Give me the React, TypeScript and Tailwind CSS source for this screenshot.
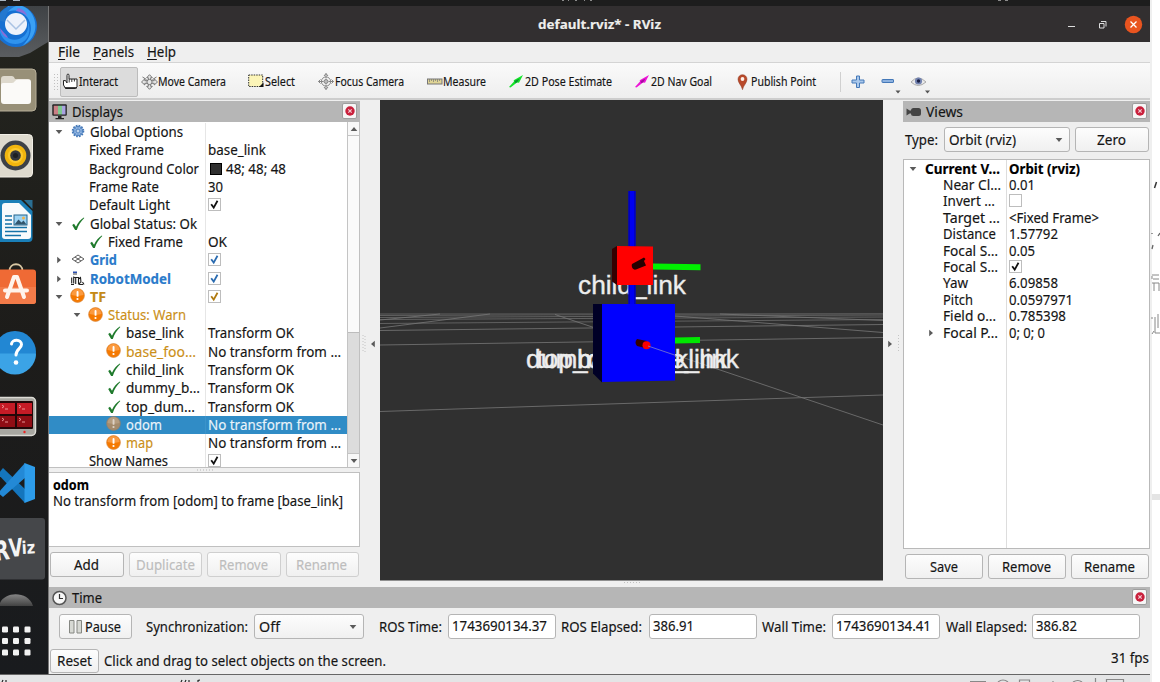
import { useLayoutEffect, useRef, useState, type ReactNode } from "react";

/* Text condensed or stretched horizontally to an exact advance width. */
function Fit({ w, children, className = "" }: { w: number; children: ReactNode; className?: string }) {
  const ref = useRef<HTMLSpanElement>(null);
  const [scale, setScale] = useState(1);
  useLayoutEffect(() => {
    const el = ref.current;
    if (!el) return;
    el.style.transform = "none";
    const natural = el.getBoundingClientRect().width;
    if (natural > 0) {
      el.style.transform = `scaleX(${w / natural})`;
      setScale(w / natural);
    }
  }, [w]);
  return (
    <span className={`inline-block shrink-0 whitespace-pre ${className}`} style={{ width: w }}>
      <span ref={ref} className="inline-block origin-left" style={{ transform: `scaleX(${scale})` }}>
        {children}
      </span>
    </span>
  );
}

/* ---------- small icons ---------- */

const Tick = ({ color = "#1f7a2c" }: { color?: string }) => (
  <svg width="14" height="14" viewBox="0 0 14 14">
    <path d="M1.200 8 3 6.800l2 2.900C7 5.500 9.500 2.600 12.800.5l.5.6C9.700 4.500 7.400 8.500 5.800 13H4.100Z" fill={color} />
  </svg>
);

const Warn = ({ dim = false }: { dim?: boolean }) => (
  <svg width="15" height="15" viewBox="0 0 15 15" className="mb-[2px]">
    <circle cx="7.500" cy="7.500" r="6.900" fill={dim ? "#a48b6c" : "#f57900"} stroke={dim ? "#8b8070" : "#d98b45"} strokeWidth=".7" />
    <path d="M1.500 7a6 6 0 0 1 12 0c-3 1-9 1-12 0Z" fill={dim ? "#b59d80" : "#fb9a3f"} />
    <rect x="6.600" y="3" width="1.900" height="5.800" rx=".9" fill={dim ? "#ddd2c4" : "#fff"} />
    <circle cx="7.500" cy="11" r="1.100" fill={dim ? "#ddd2c4" : "#fff"} />
  </svg>
);

const Gear = () => (
  <svg width="14" height="14" viewBox="0 0 14 14" className="mb-[2px]">
    <circle cx="7" cy="7" r="5.300" fill="#8db3e2" stroke="#4577b5" strokeWidth="2" strokeDasharray="1.600 1.170" />
    <circle cx="7" cy="7" r="4.600" fill="#8fb4e2" stroke="#4a7dbd" strokeWidth=".8" />
    <path d="M7 2.500v9M2.500 7h9M3.800 3.800l6.400 6.400M10.200 3.800l-6.400 6.400" stroke="#5584bf" strokeWidth=".7" />
    <circle cx="7" cy="7" r="1.500" fill="#dce8f6" stroke="#4a7dbd" strokeWidth=".6" />
  </svg>
);

const GridIcon = () => (
  <svg width="14" height="14" viewBox="0 0 14 14" fill="none" stroke="#5c5c5c" strokeWidth="1" className="mb-[2px]">
    <path d="M7 3 13 7l-6 4-6-4ZM4 5l6 4M10 5 4 9" />
  </svg>
);

const RobotIcon = () => (
  <svg width="15" height="15" viewBox="0 0 15 15">
    <path d="M3 1.300h4" stroke="#2b4fb0" strokeWidth="1.600" />
    <path d="M3 3h4" stroke="#444" strokeWidth="1" />
    <path d="M1.700 6.500v6M3.700 5.500v7M5.700 6v7M4 6.500h4.500v7M8.500 8l2-1.500.5 5M9 13.500h4M12.500 11l1.500 2.500M1 13.500h3M10.500 11l-1.500 2.500" stroke="#222" strokeWidth="1.100" fill="none" />
  </svg>
);

const Arrow = ({ dir }: { dir: "d" | "r" | "l" | "u" }) => (
  <svg width="8" height="8" viewBox="0 0 8 8" fill="#5a5a5a">
    {dir === "d" && <path d="M.7 2h6.600L4 6Z" />}
    {dir === "u" && <path d="M.7 6h6.600L4 2Z" />}
    {dir === "r" && <path d="M2.200.7v6.600L6 4Z" />}
    {dir === "l" && <path d="M5.800.7v6.600L2 4Z" />}
  </svg>
);

const Check = ({ color, off = false }: { color?: string; off?: boolean }) => (
  <svg width="13" height="13" viewBox="0 0 13 13" className="mb-px">
    <rect x=".5" y=".5" width="12" height="12" fill="#fff" stroke="#bdbdbd" />
    {!off && <path d="M3.200 6.200 5.700 9.600 9.500 2.800" fill="none" stroke={color ?? "#111"} strokeWidth="1.800" />}
  </svg>
);

const CloseBtn = () => (
  <span className="mb-[2px] flex h-4 w-[15px] items-center justify-center rounded-[2px] border border-[#9e9e9e] bg-[#f6f6f6]">
    <svg width="10" height="10" viewBox="0 0 10 10">
      <circle cx="5" cy="5" r="4.700" fill="#c9203c" />
      <path d="m3.300 3.300 3.400 3.400M6.700 3.300 3.300 6.700" stroke="#f4c9d0" strokeWidth="1.200" />
    </svg>
  </span>
);

/* ---------- displays tree ---------- */

type Row = {
  depth: number;
  open?: "d" | "r";
  icon?: ReactNode;
  text: string;
  w: number;
  cls?: string;
  value?: string;
  vw?: number;
  check?: string;
  swatch?: boolean;
  selected?: boolean;
};

const rows: Row[] = [
  { depth: 0, open: "d", icon: <Gear />, text: "Global Options", w: 93 },
  { depth: 1, text: "Fixed Frame", w: 75, value: "base_link", vw: 58 },
  { depth: 1, text: "Background Color", w: 110, value: "48; 48; 48", vw: 60, swatch: true },
  { depth: 1, text: "Frame Rate", w: 70, value: "30", vw: 15 },
  { depth: 1, text: "Default Light", w: 81, check: "#111" },
  { depth: 0, open: "d", icon: <Tick />, text: "Global Status: Ok", w: 107 },
  { depth: 1, icon: <Tick />, text: "Fixed Frame", w: 75, value: "OK", vw: 19 },
  { depth: 0, open: "r", icon: <GridIcon />, text: "Grid", w: 27, cls: "font-bold text-[#2a7bcb]", check: "#2a6bb0" },
  { depth: 0, open: "r", icon: <RobotIcon />, text: "RobotModel", w: 81, cls: "font-bold text-[#2a7bcb]", check: "#2a6bb0" },
  { depth: 0, open: "d", icon: <Warn />, text: "TF", w: 16, cls: "font-bold text-[#c58a16]", check: "#b07a10" },
  { depth: 1, open: "d", icon: <Warn />, text: "Status: Warn", w: 78, cls: "text-[#cb8f18]" },
  { depth: 2, icon: <Tick />, text: "base_link", w: 58, value: "Transform OK", vw: 86 },
  { depth: 2, icon: <Warn />, text: "base_foo…", w: 70, cls: "text-[#cb8f18]", value: "No transform from …", vw: 133 },
  { depth: 2, icon: <Tick />, text: "child_link", w: 58, value: "Transform OK", vw: 86 },
  { depth: 2, icon: <Tick />, text: "dummy_b…", w: 74, value: "Transform OK", vw: 86 },
  { depth: 2, icon: <Tick />, text: "top_dum…", w: 69, value: "Transform OK", vw: 86 },
  { depth: 2, icon: <Warn dim />, text: "odom", w: 36, value: "No transform from …", vw: 133, selected: true },
  { depth: 2, icon: <Warn />, text: "map", w: 27, cls: "text-[#cb8f18]", value: "No transform from …", vw: 133 },
  { depth: 1, text: "Show Names", w: 79, check: "#111" },
];

function TreeRow({ r }: { r: Row }) {
  return (
    <div className={`flex h-[18.3px] shrink-0 items-center ${r.selected ? "bg-[#308cc6] text-[#e9f3fa]" : ""}`}>
      <div className="flex h-full w-[155.5px] shrink-0 items-center">
        {r.depth > 0 && <span className={r.depth === 1 ? "w-[18px] shrink-0" : "w-9 shrink-0"} />}
        <span className="flex w-[19.5px] shrink-0 justify-center">{r.open && <Arrow dir={r.open} />}</span>
        {r.icon && <span className="flex w-[18px] shrink-0 justify-center">{r.icon}</span>}
        <Fit w={r.w} className={`${r.icon ? "ml-[3.500px]" : "ml-[2px]"} ${r.cls ?? ""}`}>{r.text}</Fit>
      </div>
      <div className={`flex h-full flex-1 items-center border-l ${r.selected ? "border-[#3b93ca]" : "border-[#e6e6e6]"} pl-[2px]`}>
        {r.swatch && <span className="ml-[2px] mr-1 h-3 w-3 border border-black bg-[#303030]" />}
        {r.check && <Check color={r.check} />}
        {r.value && <Fit w={r.vw ?? 50}>{r.value}</Fit>}
      </div>
    </div>
  );
}

function Button({ label, w, className, off = false }: { label: string; w: number; className: string; off?: boolean }) {
  return (
    <div
      className={`flex items-center justify-center rounded-[3px] border bg-linear-to-b from-[#fdfdfd] to-[#f0f0f0] pr-px ${
        off ? "border-[#cfcfcf] text-[#bdbdbd]" : "border-[#b5b5b5]"
      } ${className}`}
    >
      <Fit w={w}>{label}</Fit>
    </div>
  );
}

/* ---------- dock ---------- */

function Dock() {
  return (
    <div className="flex w-12 shrink-0 flex-col bg-linear-to-b from-[#24251f] via-[#1d1c1a] to-[#191b1e]">
      <svg width="48" height="51" viewBox="0 6 48 51" className="shrink-0">
        <defs>
          <linearGradient id="sky" x1="0" y1="0" x2="0" y2="1">
            <stop offset="0" stopColor="#3f4245" />
            <stop offset="1" stopColor="#5e6164" />
          </linearGradient>
        </defs>
        <path d="M0 6h48v36L30 53 0 64Z" fill="url(#sky)" />
        <circle cx="16" cy="26" r="21" fill="#1670d2" />
        <path d="M8 6c9-3 19 0 24 8 7 12 3 26-10 32 9-8 12-20 5-29C20 9 10 9 4 14Z" fill="#3aa0f4" />
        <path d="M-1 26c2 10 12 16 20 13 8-3 11-11 8-19 5 9 2 20-6 23-11 4-22-4-22-17Z" fill="#2f93ee" />
        <path d="M18 8c5 1 8 4 9 8-3-3-7-4-11-5Z" fill="#8a6fd8" />
        <path d="M0 28c1 5 4 9 8 10-1-3-5-6-8-10Z" fill="#8a6fd8" />
        <circle cx="16" cy="24" r="11" fill="#edf2fb" />
        <path d="m7 20 9 9 9-9" fill="none" stroke="#a9c3e4" strokeWidth="1.500" />
        <path d="M-3 20c3-9 12-17 22-15-10 3-14 9-14 17Z" fill="#2478cf" />
      </svg>
      <svg width="48" height="66" viewBox="0 57 48 66" className="shrink-0">
        <rect x="-8" y="69" width="44" height="42" rx="4" fill="#989078" stroke="#b7af99" />
        <path d="M1 79q0-3 3-3h8q2 0 3 3h13q3 0 3 3v9H1Z" fill="#ded9cd" />
        <path d="M1 85q0-2 2-2h9q2 0 3-2 1-1.500 3-1.500h10q3 0 3 3V101q0 3-3 3H4q-3 0-3-3Z" fill="#fbfaf8" />
      </svg>
      <svg width="48" height="66" viewBox="0 123 48 66" className="shrink-0">
        <rect x="-8" y="134.500" width="40.500" height="42.500" rx="4" fill="#dedace" stroke="#f1eee6" />
        <circle cx="15.500" cy="155.500" r="15" fill="#3d4147" />
        <circle cx="15.500" cy="155.500" r="10.800" fill="#f1b50e" />
        <circle cx="15.500" cy="155.500" r="7.500" fill="#fbc92d" />
        <circle cx="15.500" cy="155.500" r="5.300" fill="#33363b" />
        <circle cx="15.500" cy="155.500" r="2.500" fill="#1d1f22" />
      </svg>
      <svg width="48" height="65" viewBox="0 189 48 65" className="shrink-0">
        <path d="M-6 200h27l11.500 11V238q0 4-4 4H-6Z" fill="#1a7fb8" />
        <path d="M2 206q0-3 3-3h14l12 12v21q0 3-3 3H5q-3 0-3-3Z" fill="#f7fafc" />
        <path d="M24 200h8.500v9Z" fill="#2a6f93" />
        <path d="M5 216h7M5 220h7M5 224h7M5 227.500h22M5 231.500h22M5 235.500h16" stroke="#1673a8" strokeWidth="1.500" />
        <rect x="14" y="215" width="13" height="10" fill="#9cd3f4" stroke="#24658c" />
        <path d="m14.500 224.500 4-5 3 3 2-2 3 4Z" fill="#33566d" />
        <circle cx="23.500" cy="218" r="1.500" fill="#f1b34b" />
      </svg>
      <svg width="48" height="66" viewBox="0 254 48 66" className="shrink-0">
        <path d="M9.500 271c0-9 13-9 13 0" fill="none" stroke="#d8c7a3" strokeWidth="1.800" />
        <rect x="-8" y="269.500" width="44" height="34.500" rx="3" fill="#ef6a35" />
        <path d="M-8 287h44v14q0 3-3 3H-8Z" fill="#f37b49" />
        <path d="m7 297 7-20h3l7 20M5 290.500h22" fill="none" stroke="#fff3ec" strokeWidth="4" strokeLinecap="round" strokeLinejoin="round" />
      </svg>
      <svg width="48" height="65" viewBox="0 320 48 65" className="shrink-0">
        <circle cx="15" cy="352" r="21" fill="#2287d3" />
        <path d="M-6 353.500h42A21 21 0 0 1-6 353.500Z" fill="#3ba3e6" />
        <path d="M11.500 344c.5-5 10-5 10 .5 0 4-5.500 4.500-5.500 10.500" fill="none" stroke="#fff" strokeWidth="3" strokeLinecap="round" />
        <circle cx="16" cy="362.500" r="2.300" fill="#fff" />
      </svg>
      <svg width="48" height="65" viewBox="0 385 48 65" className="shrink-0">
        <rect x="-8" y="397.500" width="43.500" height="38" rx="4" fill="#a8a7a1" stroke="#dcdbd5" strokeWidth="1.500" />
        <rect x="-5" y="401" width="38" height="28" rx="1" fill="#230708" />
        <rect x="0" y="403" width="15" height="11" fill="#c51b26" />
        <rect x="17" y="403" width="15" height="11" fill="#c51b26" />
        <rect x="0" y="416" width="15" height="11" fill="#8f0d14" />
        <rect x="17" y="416" width="15" height="11" fill="#8f0d14" />
        <path d="m2 405 2 1.500-2 1.500m3 1h3M19 405l2 1.500-2 1.500m3 1h3M2 418l2 1.500-2 1.500m3 1h3M19 418l2 1.500-2 1.500m3 1h3" fill="none" stroke="#f2a2a2" strokeWidth=".9" />
        <circle cx="24.500" cy="432" r="1.200" fill="#e22" />
      </svg>
      <svg width="48" height="66" viewBox="0 450 48 66" className="shrink-0">
        <path d="m-2 474 27 29 2-12-24-23Z" fill="#1475bd" />
        <path d="m-2 493 27-30 1 14-23 20Z" fill="#2389d6" />
        <path d="m24.500 463 10.500 4v32l-10.500 4Z" fill="#2d9cea" />
      </svg>
      <svg width="48" height="66" viewBox="0 516 48 66" className="shrink-0">
        <rect x="-6" y="518" width="51" height="61.500" rx="3" fill="#45474a" />
        <g fontFamily="DejaVu Sans" fontWeight="bold" fill="#f4f4f4">
          <text transform="translate(-4.500 561) rotate(-8)" fontSize="27" textLength="15" lengthAdjust="spacingAndGlyphs">R</text>
          <text transform="translate(9.500 557) rotate(-5)" fontSize="25" textLength="14" lengthAdjust="spacingAndGlyphs">V</text>
          <text transform="translate(22 554) rotate(-3)" fontSize="17.500" textLength="13.500" lengthAdjust="spacingAndGlyphs">iz</text>
        </g>
      </svg>
      <svg width="48" height="26" viewBox="0 582 48 26" className="shrink-0">
        <defs>
          <linearGradient id="dome" x1="0" y1="0" x2="0" y2="1">
            <stop offset="0" stopColor="#858585" />
            <stop offset="1" stopColor="#424242" />
          </linearGradient>
        </defs>
        <path d="M-1 606c3-15 29-16 34 0Z" fill="url(#dome)" />
      </svg>
      <svg width="48" height="66" viewBox="0 608 48 66" className="shrink-0">
        {[626.5, 638, 649.5].map((y) =>
          [2, 13, 24.5].map((x) => <rect key={`${x}-${y}`} x={x} y={y} width="6" height="6" rx="1.200" fill="#f2f2f2" />),
        )}
      </svg>
    </div>
  );
}

/* ---------- 3D viewport ---------- */

function Viewport() {
  return (
    <svg width="503" height="481" viewBox="380 100 503 481" className="shrink-0">
      <rect x="380" y="100" width="503" height="480.500" fill="#303030" />
      <g stroke="#777" strokeWidth=".8" fill="none">
        <path d="M380 315.500 883 313.500M380 317.500 883 315M380 319.500 883 317M380 323.500 883 319.500" strokeOpacity=".85" />
        <path d="M380 314H883" strokeWidth="1.500" stroke="#505050" />
        <path d="M380 330.500 883 324.500M380 345 883 337.500M380 411.500 883 395" />
        <path d="M555 314.500 646 345 883 425M675 316 883 332.500M720 314 883 320.500M380 328 490 314M380 320 440 314" />
      </g>
      <g fill="#ededed" stroke="#ededed" strokeWidth=".35" fontFamily="Liberation Sans" fontSize="26.300">
        <text x="578" y="293.500" textLength="108">child_link</text>
        <text x="526" y="367.500" textLength="213">dummy_base_link</text>
        <text x="536.500" y="367.500" textLength="191">top_dummy_link</text>
        <text x="577" y="367.500" textLength="111">base_link</text>
      </g>
      <path d="M628.500 191h7v114h-7Z" fill="#0000f0" />
      <path d="M628.500 191h1.200v114h-1.200ZM634.300 191h1.200v114h-1.200Z" fill="#0000b0" />
      <path d="m653 263.500 47.500.8v6l-47.500-.8Z" fill="#00f000" />
      <path d="m612 249 5-3v39l-5-3.500Z" fill="#350000" />
      <path d="m617 246 36 .5v38.500h-36Z" fill="red" />
      <path d="m632 264 12-6.500 1.500 1.500-1.500 2 2 4.500-10 4c-3 1-5-3-4-5.500Z" fill="#250000" />
      <path d="M675 337.500 700 337v6l-25 .5Z" fill="#00e800" />
      <path d="M593 304h9v78.500l-9-9Z" fill="#000026" />
      <path d="M602 304h73v76.500l-73 1.500Z" fill="#00f" />
      <path d="m637 339 10 2-2 7-8-2c-2-2-2-5 0-7Z" fill="#350000" />
      <circle cx="646.500" cy="345.300" r="4" fill="#fa0000" />
      <path d="m648 346 28 9.500" stroke="#8080c8" strokeWidth=".8" />
    </svg>
  );
}

/* ---------- toolbar ---------- */

const tools: { label: string; w: number; box: string; icon: ReactNode }[] = [
  {
    label: "Interact", w: 39, box: "w-[78px] rounded-[2px] border border-[#bcbcbc] bg-[#dcdcdc] pl-[1px]",
    icon: (
      <svg width="17" height="17" viewBox="0 0 17 17">
        <path d="M5 10V2.500Q5 1 6 1t1 1.500V6h8v8l-1.500 1.500h-10L1.500 12V7.500Q4 6.500 5 10Z" fill="#fff" stroke="#222" strokeLinejoin="round" />
        <path d="M3 14.800h12" stroke="#222" strokeWidth="1.300" />
        <path d="M7.200 6v3.500M9.800 6v3M12.400 6v2.500" stroke="#222" strokeWidth=".9" />
      </svg>
    ),
  },
  {
    label: "Move Camera", w: 68, box: "ml-[3px] w-[107px]",
    icon: (
      <svg width="17" height="16" viewBox="0 0 17 16" fill="#e6e6e6" stroke="#6b6b6b" strokeWidth=".9">
        <path d="m8.500.7 2.800 3H9.700v3h3.500V4.800L16.500 8l-3.300 3V9.300H9.700v3h1.600l-2.800 3-2.800-3h1.600v-3H3.800V11L.5 8l3.300-3.200v1.900h3.500v-3H5.700Z" />
        <circle cx="8.500" cy="8" r="2.600" />
        <path d="m1.500 3 4 2.500M15.500 3l-4 2.500" />
      </svg>
    ),
  },
  {
    label: "Select", w: 30, box: "w-[70px]",
    icon: (
      <svg width="17" height="16" viewBox="0 0 17 16">
        <rect x=".7" y="1" width="14" height="11.500" fill="#fcf5b8" stroke="#333" strokeDasharray="1.500 1" />
        <path d="M15.500 8.500V13H11Z" fill="#111" />
      </svg>
    ),
  },
  {
    label: "Focus Camera", w: 69, box: "w-[109px]",
    icon: (
      <svg width="17" height="17" viewBox="0 0 17 17" fill="none" stroke="#858585">
        <circle cx="8" cy="8.500" r="4.600" />
        <circle cx="8" cy="8.500" r="2" fill="#bbb" />
        <path d="M8 .5v5M8 11.500v5M.5 8.500h5M10.500 8.500h5M6 3l2-2.500L10 3M6 14l2 2.500 2-2.500M2.500 6.500l-2 2 2 2M13.500 6.500l2 2-2 2" />
      </svg>
    ),
  },
  {
    label: "Measure", w: 43, box: "w-[81px]",
    icon: (
      <svg width="16" height="16" viewBox="0 0 16 16">
        <rect x=".5" y="5" width="14.500" height="5" fill="#dfd496" stroke="#777" />
        <path d="M2.500 5v3M4.500 5v2M6.500 5v3M8.500 5v2M10.500 5v3M12.500 5v2" stroke="#777" strokeWidth=".7" />
      </svg>
    ),
  },
  {
    label: "2D Pose Estimate", w: 87, box: "ml-[1px] w-[125px]",
    icon: (
      <svg width="16" height="16" viewBox="0 0 16 16"><path d="m0 13 5-5.500-.3-1.200L14 1l-4 7.800-2-.3-6.500 5Z" fill="#13e52a" /><path d="m5.500 7 5-2.500-2.500 4-2 .5Z" fill="#09942e" /></svg>
    ),
  },
  {
    label: "2D Nav Goal", w: 61, box: "ml-[1px] w-[100px]",
    icon: (
      <svg width="16" height="16" viewBox="0 0 16 16"><path d="m0 13 5-5.500-.3-1.200L14 1l-4 7.800-2-.3-6.500 5Z" fill="#ed14d6" /><path d="m5.500 7 5-2.500-2.500 4-2 .5Z" fill="#a30c9f" /></svg>
    ),
  },
  {
    label: "Publish Point", w: 65, box: "w-[105px]",
    icon: (
      <svg width="16" height="16" viewBox="0 0 16 16"><path d="M7.500 15.700C6.500 11 3 9 3 5.200a4.500 4.500 0 0 1 9 0C12 9 8.500 11 7.500 15.700Z" fill="#b94a2b" stroke="#8d3721" strokeWidth=".5" /><circle cx="7.500" cy="5" r="1.900" fill="#fff0e8" /></svg>
    ),
  },
];

function Toolbar() {
  return (
    <div className="flex h-[35px] shrink-0 items-center bg-linear-to-b from-[#fafafa] to-[#eeeeee] pl-[3px] pt-[2px] text-[12px]">
      <svg width="8" height="20" viewBox="0 0 8 20" className="shrink-0"><path d="M2.500 2v16M5.500 2v16" stroke="#c0c0c0" strokeDasharray="1 2" /></svg>
      {tools.map((t) => (
        <div key={t.label} className={`flex h-[30px] shrink-0 items-center ${t.box}`}>
          {t.icon}
          <Fit w={t.w}>{t.label}</Fit>
        </div>
      ))}
      <div className="mr-[10px] h-5 w-px bg-[#d0d0d0]" />
      <svg width="80" height="30" viewBox="852 67 80 30" className="shrink-0">
        <path d="M857.500 76h3v4h4.500v3h-4.500v4.500h-3V83H853v-3h4.500Z" fill="#aac8eb" stroke="#4478b8" />
        <rect x="883" y="79.500" width="11.500" height="3" rx=".5" fill="#8cb1df" stroke="#4478b8" />
        <path d="M896.500 90.500h5L899 93.500ZM926 90.500h5l-2.500 3Z" fill="#555" />
        <path d="M912 82q7-8 15 0-8 7-15 0Z" fill="#ebebeb" stroke="#aaa" />
        <circle cx="919.500" cy="81" r="3.600" fill="#7383b0" />
        <circle cx="919.500" cy="81" r="1.700" fill="#1b2247" />
      </svg>
    </div>
  );
}

/* ---------- views panel ---------- */

const views: { t: string; w: number; v?: string; vw?: number; check?: "on" | "off"; bold?: boolean; open?: "d" | "r" }[] = [
  { t: "Current V…", w: 75, v: "Orbit (rviz)", vw: 71, bold: true, open: "d" },
  { t: "Near Cl…", w: 58, v: "0.01", vw: 26 },
  { t: "Invert …", w: 52, check: "off" },
  { t: "Target …", w: 57, v: "<Fixed Frame>", vw: 90 },
  { t: "Distance", w: 53, v: "1.57792", vw: 49 },
  { t: "Focal S…", w: 55, v: "0.05", vw: 26 },
  { t: "Focal S…", w: 55, check: "on" },
  { t: "Yaw", w: 25, v: "6.09858", vw: 49 },
  { t: "Pitch", w: 30, v: "0.0597971", vw: 64 },
  { t: "Field o…", w: 53, v: "0.785398", vw: 57 },
  { t: "Focal P…", w: 55, v: "0; 0; 0", vw: 36, open: "r" },
];

function Combo({ label, w, className }: { label: string; w: number; className: string }) {
  return (
    <div className={`flex h-[25px] items-center justify-between rounded-[3px] border border-[#b5b5b5] bg-linear-to-b from-[#fdfdfd] to-[#f0f0f0] pl-1 pr-1.5 ${className}`}>
      <Fit w={w}>{label}</Fit>
      <Arrow dir="d" />
    </div>
  );
}

const Field = ({ value, w }: { value: string; w: number }) => (
  <div className="flex h-[25px] w-[108px] shrink-0 items-center rounded-[3px] border border-[#b5b5b5] bg-white pb-px pl-[3px]">
    <Fit w={w}>{value}</Fit>
  </div>
);

export default function App() {
  return (
    <div className="flex h-[682px] w-[1160px] overflow-hidden bg-white font-['Noto_Sans',sans-serif] text-[13.500px] leading-[18px] text-[#141414] [-webkit-text-stroke:0.15px]">
      <div className="flex w-[1150px] shrink-0 flex-col">
        <div className="h-1.5 shrink-0 bg-[#1d1d1d]">
          <svg width="1150" height="6" viewBox="0 0 1150 6">
            <path d="M0 0h6M13 0h7" stroke="#a9b5c0" strokeWidth="2" />
            <path d="M562 0h2M568 0h1M575 0h2M584 0h1M590 0h2M998 0h3M1005 0h3" stroke="#8b8b8b" strokeWidth="2" />
          </svg>
        </div>
        <div className="flex h-[668px] shrink-0">
          <Dock />
          <div className="flex w-[1102px] shrink-0 flex-col border-l border-[#777] bg-[#efefef]">
            {/* title bar */}
            <div className="flex h-9 shrink-0 items-center bg-[#322f30] text-white">
              <div className="w-[488.5px] shrink-0" />
              <Fit w={123} className="text-[13px] font-bold text-[#eeeeec]">default.rviz* - RViz</Fit>
              <svg width="90" height="30" viewBox="1060 8 90 30" className="ml-auto shrink-0">
                <path d="M1068 25.500h7" stroke="#ddd" />
                <path d="M1099.500 22.500h4.500v4.500h-4.500ZM1101 20.500h5v5" fill="none" stroke="#ddd" />
                <circle cx="1133.500" cy="23.500" r="8.700" fill="#e9541f" />
                <path d="m1130.500 20.500 6 6m0-6-6 6" stroke="#fff" strokeWidth="1.300" />
              </svg>
            </div>
            {/* menu bar */}
            <div className="flex h-[21px] shrink-0 items-center border-b border-[#d4d4d4] pl-[9px]">
              <Fit w={22} className="mr-[13px]"><u className="underline-offset-2">F</u>ile</Fit>
              <Fit w={41} className="mr-[13px]"><u className="underline-offset-2">P</u>anels</Fit>
              <Fit w={29}><u className="underline-offset-2">H</u>elp</Fit>
            </div>
            <Toolbar />
            <div className="h-[2px] shrink-0 bg-[#cdcdcd]" />
            {/* main area */}
            <div className="flex h-[487px] shrink-0">
              <div className="flex w-[311px] shrink-0 flex-col">
                <div className="mt-px flex h-[21px] shrink-0 items-center bg-[#b6b6b6] pl-[3px] pr-[3px]">
                  <svg width="16" height="17" viewBox="0 0 16 17" className="mr-1">
                    <rect x=".3" y="1.300" width="14.500" height="11.500" rx="1" fill="#222" />
                    <path d="M1.700 2.700H6v8.800H1.700Z" fill="#c87f85" />
                    <path d="M6 2.700h4v8.800H6Z" fill="#7fc890" />
                    <path d="M10 2.700h3.500v8.800H10Z" fill="#a8a2e0" />
                    <path d="M6 13h3.500v2H12v1.200H3.500V15H6Z" fill="#222" />
                  </svg>
                  <Fit w={51}>Displays</Fit>
                  <span className="ml-auto"><CloseBtn /></span>
                </div>
                <div className="flex h-[346px] shrink-0 overflow-hidden border-b border-r border-[#c0c0c0] bg-white">
                  <div className="flex w-[298px] shrink-0 flex-col overflow-hidden pt-px">
                    {rows.map((r, i) => <TreeRow key={i} r={r} />)}
                  </div>
                  <div className="flex flex-1 flex-col border-l border-[#c4c4c4] bg-[#dcdcdc]">
                    <div className="flex h-[14px] shrink-0 items-center justify-center border-b border-[#c4c4c4] bg-[#f8f8f8]"><Arrow dir="u" /></div>
                    <div className="h-[197px] shrink-0 border-b border-[#bcbcbc] bg-[#fafafa]" />
                    <div className="flex-1" />
                    <div className="flex h-[14px] shrink-0 items-center justify-center border-t border-[#c4c4c4] bg-[#f8f8f8]"><Arrow dir="d" /></div>
                  </div>
                </div>
                <div className="flex h-1 shrink-0 items-center justify-center">
                  <svg width="16" height="2"><path d="M0 1h16" stroke="#b5b5b5" strokeDasharray="1 2" /></svg>
                </div>
                <div className="flex h-[75px] shrink-0 flex-col border border-l-0 border-[#c0c0c0] bg-white pl-1 pt-[3px]">
                  <Fit w={36} className="h-[17px] font-bold text-black">odom</Fit>
                  <Fit w={290} className="h-[17px] leading-[16px]">No transform from [odom] to frame [base_link]</Fit>
                </div>
                <div className="mt-[5px] flex gap-[5px] pl-[1px]">
                  <Button label="Add" w={25} className="h-[25px] w-[74px]" />
                  <Button label="Duplicate" w={59} className="h-[25px] w-[73px]" off />
                  <Button label="Remove" w={49} className="h-[25px] w-[73.500px]" off />
                  <Button label="Rename" w={51} className="h-[25px] w-[73.500px]" off />
                </div>
              </div>
              <div className="flex w-5 shrink-0 items-center gap-[3px] pl-[2px]">
                <svg width="4" height="18"><path d="M1 0v18M3 1v17" stroke="#c4c4c4" strokeDasharray="1 2" /></svg>
                <Arrow dir="l" />
              </div>
              <div className="flex w-[503px] shrink-0 flex-col items-center">
                <Viewport />
                <svg width="16" height="3"><path d="M0 1.500h16" stroke="#c0c0c0" strokeDasharray="1 2" /></svg>
              </div>
              <div className="flex w-5 shrink-0 items-center gap-[2px] pl-[3px]">
                <Arrow dir="r" />
                <svg width="4" height="18"><path d="M2.500 0v18" stroke="#c4c4c4" strokeDasharray="1 2" /></svg>
              </div>
              <div className="flex w-[247px] shrink-0 flex-col">
                <div className="mt-px flex h-[21px] shrink-0 items-center bg-[#b6b6b6] pl-[3px] pr-[3px]">
                  <svg width="16" height="14" viewBox="0 0 16 14" className="mr-1" fill="#444">
                    <rect x="5" y="3" width="10" height="8" rx="2.500" />
                    <path d="M.5 3.500 4.500 6V8L.5 10.500ZM4 5.500h2v3H4Z" />
                  </svg>
                  <Fit w={37}>Views</Fit>
                  <span className="ml-auto"><CloseBtn /></span>
                </div>
                <div className="mt-[5px] flex h-[25px] shrink-0 items-center pl-[2px]">
                  <Fit w={33}>Type:</Fit>
                  <Combo label="Orbit (rviz)" w={67} className="ml-1.5 w-[126px]" />
                  <Button label="Zero" w={29} className="ml-[5px] h-[25px] w-[74px]" />
                </div>
                <div className="mt-[7px] flex h-[390px] shrink-0 border border-[#b9b9b9] bg-white">
                  <div className="flex w-[103px] shrink-0 flex-col border-r border-[#dddddd] pt-[0.5px]">
                    {views.map((r, i) => (
                      <div key={i} className={`flex h-[16.400px] shrink-0 items-center ${r.bold ? "font-bold text-black" : "pl-[18px]"}`}>
                        <span className="flex w-[18px] shrink-0 justify-center">{r.open && <Arrow dir={r.open} />}</span>
                        <Fit w={r.w} className="ml-[3px]">{r.t}</Fit>
                      </div>
                    ))}
                  </div>
                  <div className="flex flex-1 flex-col pl-[2px] pt-[0.5px]">
                    {views.map((r, i) => (
                      <div key={i} className={`flex h-[16.400px] shrink-0 items-center ${r.bold ? "font-bold text-black" : ""}`}>
                        {r.check && <Check off={r.check === "off"} />}
                        {r.v && <Fit w={r.vw ?? 40}>{r.v}</Fit>}
                      </div>
                    ))}
                  </div>
                </div>
                <div className="mt-[5px] flex gap-[5px] pl-[2px]">
                  <Button label="Save" w={28} className="h-[25px] w-[78px]" />
                  <Button label="Remove" w={49} className="h-[25px] w-[78px]" />
                  <Button label="Rename" w={51} className="h-[25px] w-[78px]" />
                </div>
              </div>
            </div>
            {/* time panel */}
            <div className="flex h-[21px] shrink-0 items-center bg-[#b6b6b6] pl-[3px] pr-[3px]">
              <svg width="16" height="16" viewBox="0 0 16 16" className="mr-1">
                <circle cx="7.500" cy="8" r="6.500" fill="#f8f8f8" stroke="#555" strokeWidth="1.500" />
                <path d="M7.500 4v4.500h3.500" fill="none" stroke="#333" strokeWidth="1.200" />
              </svg>
              <Fit w={30}>Time</Fit>
              <span className="ml-auto"><CloseBtn /></span>
            </div>
            <div className="mt-1.5 flex h-[25px] shrink-0 items-center pl-[10px]">
              <div className="flex h-[25px] w-[73px] shrink-0 items-center rounded-[3px] border border-[#b5b5b5] bg-linear-to-b from-[#fdfdfd] to-[#f0f0f0] pl-[9px]">
                <svg width="16" height="16" viewBox="0 0 16 16" fill="#d7d9d4" stroke="#858782">
                  <path d="M.5 1.500h4.500v12.500H.5ZM8 1.500h4.500v12.500H8Z" />
                </svg>
                <Fit w={36}>Pause</Fit>
              </div>
              <Fit w={102} className="ml-[14px]">Synchronization:</Fit>
              <Combo label="Off" w={21} className="ml-1.5 w-[110px]" />
              <Fit w={63} className="ml-[14.5px] mr-[6.5px]">ROS Time:</Fit>
              <Field value="1743690134.37" w={95} />
              <Fit w={81} className="ml-[5px] mr-[6.5px]">ROS Elapsed:</Fit>
              <Field value="386.91" w={41} />
              <Fit w={64} className="ml-[5.5px] mr-1.5">Wall Time:</Fit>
              <Field value="1743690134.41" w={95} />
              <Fit w={81} className="ml-[5.5px] mr-[5.5px]">Wall Elapsed:</Fit>
              <Field value="386.82" w={41} />
            </div>
            <div className="mt-[10px] flex h-6 shrink-0 items-center pl-[1px]">
              <Button label="Reset" w={35} className="h-6 w-[49px]" />
              <Fit w={282} className="ml-[5px]">Click and drag to select objects on the screen.</Fit>
              <Fit w={38} className="mb-1.5 ml-auto mr-[1px]">31 fps</Fit>
            </div>
          </div>
        </div>
        <svg width="1150" height="8" viewBox="0 674 1150 8" className="shrink-0">
          <path d="M0 674h1150v8H0Z" fill="#e4e5e6" />
          <path d="M0 674.500h1150" stroke="#666" />
          <path d="m2 682 1-2M6 682v-2M181 682l1-2M185 682l1-2M189 682v-2M198 682v-1.500l2-.5" stroke="#222" strokeWidth="1.200" fill="none" />
          <g fill="none" stroke="#888" strokeWidth="1.200">
            <path d="M970 681.500h16M1019.500 682v-2h10v2M1106.500 682v-2.500h17v2.500" />
            <path d="M998 682q5-4 10 0M1053 681v1M1073 682q5-3 9 0" />
            <path d="M1095.500 678v4" />
          </g>
        </svg>
      </div>
      <svg width="10" height="682" viewBox="0 0 10 682" className="shrink-0">
        <path d="M0 0h2v682H0Z" fill="#efefef" />
        <path d="m6.500 182-2 6" stroke="#333" strokeWidth="1.500" />
        <path d="M2 233v1M2 249l1-4M8 236l2-3" stroke="#666" strokeWidth="1.300" />
        <path d="M2 275h7M3 279h6M2 283h7v8M4 283v8M2 279v-3" stroke="#888" fill="none" />
        <path d="M2 317v2M2 334l2-3M5 317v16h5M8 314v14" stroke="#888" fill="none" />
        <path d="M2 494h8v6H2Z" fill="#e4e4e4" />
      </svg>
    </div>
  );
}
